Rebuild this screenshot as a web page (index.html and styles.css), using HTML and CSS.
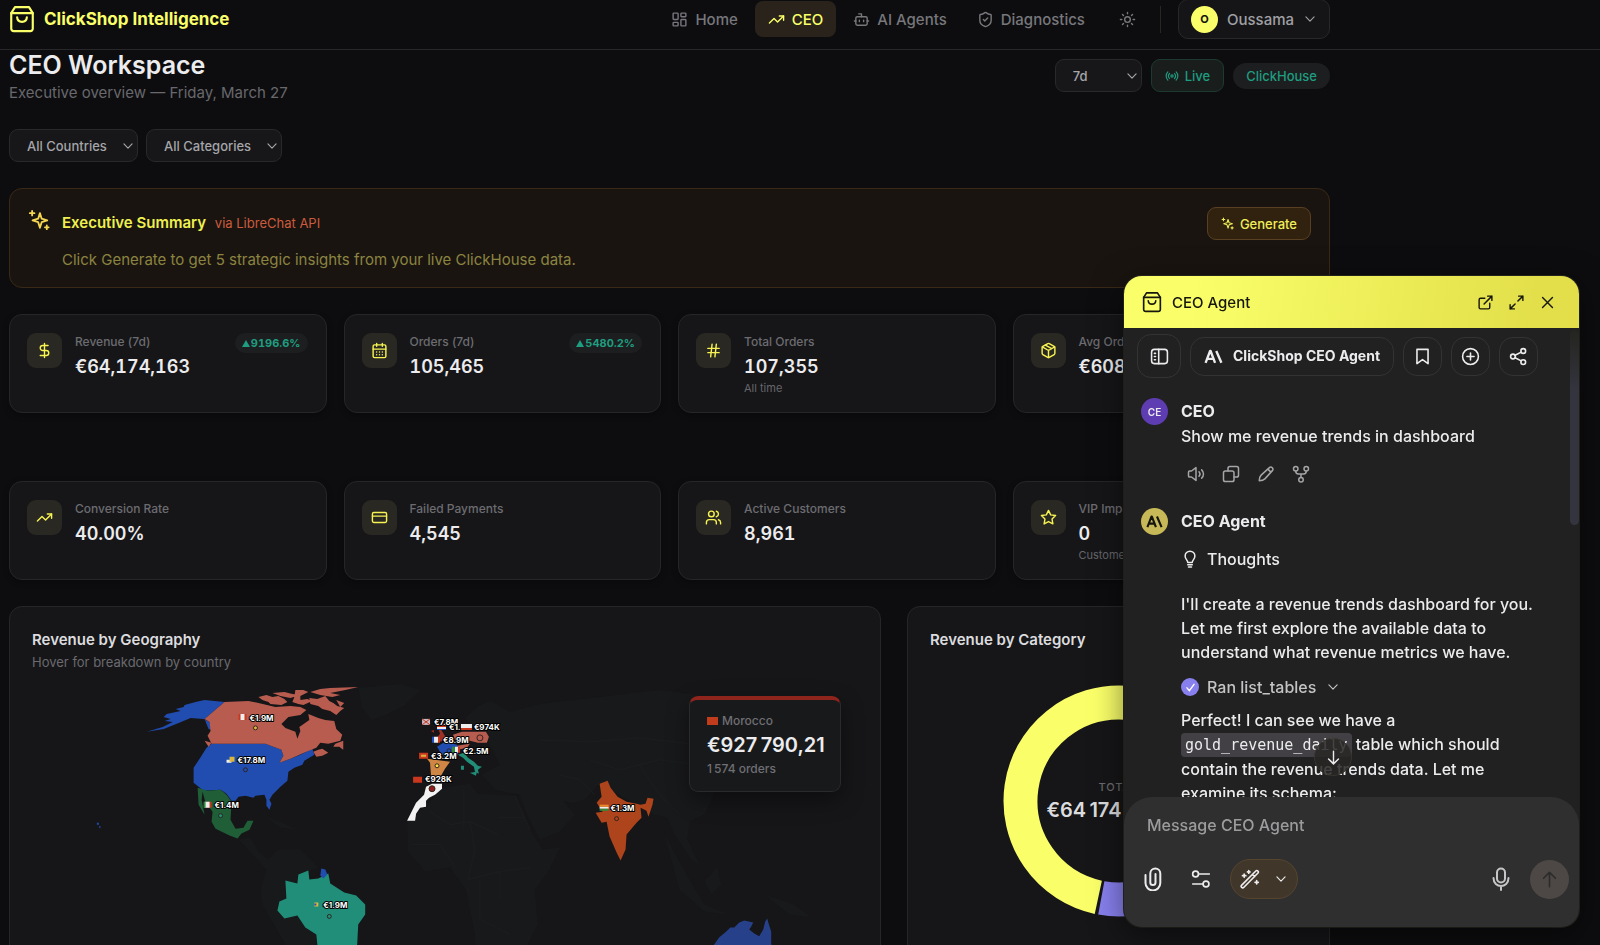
FILE: index.html
```html
<!DOCTYPE html>
<html lang="en">
<head>
    <meta charset="UTF-8">
    <meta name="viewport" content="width=device-width, initial-scale=1.0">
    <title>ClickShop Intelligence</title>
    <link rel="stylesheet" href="styles.css">
</head>
<body>
    <!-- shared icons -->
    <svg class="sprite" aria-hidden="true">
        <symbol id="i-bag" viewBox="0 0 24 26"><path d="M2 7.5 5.5 2h13L22 7.5V22a2.200 2.200 0 0 1-2.200 2.200H4.200A2.200 2.200 0 0 1 2 22z"/><path d="M2 7.500h20M7.500 11.500c.4 5.500 8.600 5.500 9 0"/></symbol>
        <symbol id="i-grid" viewBox="0 0 24 24"><rect x="3" y="3" width="7" height="9" rx="1"/><rect x="14" y="3" width="7" height="5" rx="1"/><rect x="14" y="12" width="7" height="9" rx="1"/><rect x="3" y="16" width="7" height="5" rx="1"/></symbol>
        <symbol id="i-trend" viewBox="0 0 24 24"><path d="m22 7-8.500 8.500-5-5L2 17"/><path d="M16 7h6v6"/></symbol>
        <symbol id="i-bot" viewBox="0 0 24 24"><path d="M12 8V4H8"/><rect x="4" y="8" width="16" height="12" rx="2"/><path d="M2 14h2M20 14h2M15 13v2M9 13v2"/></symbol>
        <symbol id="i-shield" viewBox="0 0 24 24"><path d="M20 13c0 5-3.500 7.500-7.660 8.950a1 1 0 0 1-.67-.01C7.500 20.500 4 18 4 13V6a1 1 0 0 1 1-1c2 0 4.500-1.200 6.240-2.720a1.170 1.170 0 0 1 1.520 0C14.510 3.810 17 5 19 5a1 1 0 0 1 1 1z"/><path d="m9 12 2 2 4-4"/></symbol>
        <symbol id="i-sun" viewBox="0 0 24 24"><circle cx="12" cy="12" r="4"/><path d="M12 2v2M12 20v2M4.930 4.930l1.410 1.410M17.660 17.660l1.410 1.410M2 12h2M20 12h2M6.340 17.660l-1.410 1.410M19.070 4.930l-1.410 1.410"/></symbol>
        <symbol id="i-down" viewBox="0 0 24 24"><path d="m5 8.500 7 7 7-7"/></symbol>
        <symbol id="i-live" viewBox="0 0 24 24"><path d="M4.900 19.100C1 15.200 1 8.800 4.900 4.900M7.800 16.200c-2.300-2.300-2.300-6.100 0-8.500M16.200 7.800c2.300 2.300 2.300 6.100 0 8.500M19.100 4.900C23 8.800 23 15.100 19.100 19"/><circle cx="12" cy="12" r="2"/></symbol>
        <symbol id="i-sparkles" viewBox="0 0 24 24"><path d="M13 4.500 14.900 10.600 21 12.500l-6.100 1.900L13 20.500l-1.900-6.100L5 12.500l6.100-1.900z"/><path d="M4.500 2v5M2 4.500h5M20.500 18v4M18.500 20h4"/></symbol>
        <symbol id="i-dollar" viewBox="0 0 24 24"><path d="M12 2v20M17 5H9.500a3.500 3.500 0 0 0 0 7h5a3.500 3.500 0 0 1 0 7H6"/></symbol>
        <symbol id="i-calendar" viewBox="0 0 24 24"><path d="M8 2v4M16 2v4"/><rect x="3" y="4" width="18" height="18" rx="2"/><path d="M3 10h18M8 14h.01M12 14h.01M16 14h.01M8 18h.01M12 18h.01M16 18h.01"/></symbol>
        <symbol id="i-hash" viewBox="0 0 24 24"><path d="M4 9h16M4 15h16M10 3 8 21M16 3l-2 18"/></symbol>
        <symbol id="i-box" viewBox="0 0 24 24"><path d="M11 21.730a2 2 0 0 0 2 0l7-4A2 2 0 0 0 21 16V8a2 2 0 0 0-1-1.730l-7-4a2 2 0 0 0-2 0l-7 4A2 2 0 0 0 3 8v8a2 2 0 0 0 1 1.730z"/><path d="M12 22V12M3.300 7 12 12l8.700-5M7.500 4.270l9 5.150"/></symbol>
        <symbol id="i-card" viewBox="0 0 24 24"><rect x="2" y="5" width="20" height="14" rx="2"/><path d="M2 10h20"/></symbol>
        <symbol id="i-users" viewBox="0 0 24 24"><path d="M16 21v-2a4 4 0 0 0-4-4H6a4 4 0 0 0-4 4v2"/><circle cx="9" cy="7" r="4"/><path d="M22 21v-2a4 4 0 0 0-3-3.870M16 3.130a4 4 0 0 1 0 7.750"/></symbol>
        <symbol id="i-star" viewBox="0 0 24 24"><path d="m12 2 3.090 6.260L22 9.270l-5 4.870 1.180 6.880L12 17.770l-6.180 3.250L7 14.140 2 9.270l6.910-1.010z"/></symbol>
        <symbol id="i-external" viewBox="0 0 24 24"><path d="M15 3h6v6M10 14 21 3M18 13v6a2 2 0 0 1-2 2H5a2 2 0 0 1-2-2V8a2 2 0 0 1 2-2h6"/></symbol>
        <symbol id="i-expand" viewBox="0 0 24 24"><path d="M15 3h6v6M9 21H3v-6M21 3l-7 7M3 21l7-7"/></symbol>
        <symbol id="i-close" viewBox="0 0 24 24"><path d="M5 5 19 19M19 5 5 19"/></symbol>
        <symbol id="i-sidebar" viewBox="0 0 24 24"><rect x="2" y="3" width="20" height="18" rx="3.500"/><path d="M11 3v18M5.500 8H7M5.500 12H7M5.500 16H7"/></symbol>
        <symbol id="i-mark" viewBox="0 0 24 20"><path d="m2 18 5.700-15h.6L14 18M4.500 13h7M15.500 3 22 18"/></symbol>
        <symbol id="i-bookmark" viewBox="0 0 24 24"><path d="M5 3h14v18l-7-5-7 5z"/></symbol>
        <symbol id="i-plus" viewBox="0 0 24 24"><circle cx="12" cy="12" r="10"/><path d="M12 7.500v9M7.500 12h9"/></symbol>
        <symbol id="i-share" viewBox="0 0 24 24"><circle cx="18" cy="5" r="3"/><circle cx="5" cy="12" r="3"/><circle cx="18" cy="19" r="3"/><path d="m7.700 10.500 7.700-4M7.700 13.500l7.700 4"/></symbol>
        <symbol id="i-speaker" viewBox="0 0 24 24"><path d="M12 3.500v17L6 16H3.500A1.500 1.500 0 0 1 2 14.500v-5A1.500 1.500 0 0 1 3.500 8H6zM16 9c1.600 1.700 1.600 4.300 0 6M19.500 6.500c3.300 3.100 3.300 7.900 0 11"/></symbol>
        <symbol id="i-copy" viewBox="0 0 24 24"><rect x="2" y="8" width="14" height="14" rx="2.500"/><path d="M8 8V4.500A2.500 2.500 0 0 1 10.500 2h9A2.500 2.500 0 0 1 22 4.500v9a2.500 2.500 0 0 1-2.500 2.500H16"/></symbol>
        <symbol id="i-pencil" viewBox="0 0 24 24"><path d="M3 21c0-4 1-6 2.500-7.500L16.500 3.500c2.500-2.500 6.500 1.500 4 4L10.500 18.500C9 20 7 21 3 21zM14.500 5.500l4 4"/></symbol>
        <symbol id="i-fork" viewBox="0 0 24 24"><circle cx="5" cy="5" r="3"/><circle cx="19" cy="5" r="3"/><circle cx="12" cy="19.500" r="3"/><path d="M5 8c0 2.500 1 4 3.500 4h7c2.500 0 3.500-1.500 3.500-4M12 12v4.500"/></symbol>
        <symbol id="i-bulb" viewBox="0 0 24 24"><path d="M9 16.500c0-3-3.500-4-3.500-8.500a6.500 6.500 0 0 1 13 0c0 4.500-3.500 5.500-3.500 8.500zM9 19.500h6M10 22.500h4"/></symbol>
        <symbol id="i-check" viewBox="0 0 24 24"><path d="m7 12.500 3.500 4L17 7.500"/></symbol>
        <symbol id="i-arrow-down" viewBox="0 0 24 24"><path d="M12 3v18M5 14l7 7 7-7"/></symbol>
        <symbol id="i-arrow-up" viewBox="0 0 24 24"><path d="M12 21V3M4.500 10.500 12 3l7.500 7.500"/></symbol>
        <symbol id="i-clip" viewBox="0 0 18 24"><path d="M1.500 8v8a7.300 7.300 0 0 0 14.800 0V6.500a5 5 0 0 0-10 0v9a2.600 2.600 0 0 0 5.200 0V7"/></symbol>
        <symbol id="i-sliders" viewBox="0 0 24 24"><circle cx="5.500" cy="6" r="3.500"/><path d="M9 6h13M2 18h12.500"/><circle cx="18" cy="18" r="3.500"/></symbol>
        <symbol id="i-wand" viewBox="0 0 24 24"><path d="M1.800 19.600 19 2.400a1.500 1.500 0 0 1 2.400 0l.2.200a1.500 1.500 0 0 1 0 2.200L4.400 22.200a1.500 1.500 0 0 1-2.200 0l-.4-.4a1.500 1.500 0 0 1 0-2.200zM15 6.500l2.600 2.600M5 6v4M3 8h4M20 14v4M18 16h4M10.500 2v3M9 3.500h3"/></symbol>
        <symbol id="i-mic" viewBox="0 0 18 24"><rect x="5" y="1.500" width="8" height="14" rx="4"/><path d="M1.500 11c0 10.500 15 10.500 15 0M9 19v4"/></symbol>
    </svg>

    <div class="app">
        <header class="topbar">
            <div class="topbar-row">
                <a class="brand" href="#"><svg class="icon brand-icon"><use href="#i-bag"/></svg>ClickShop Intelligence</a>
                <nav class="nav">
                    <a class="nav-link" href="#"><svg class="icon"><use href="#i-grid"/></svg>Home</a>
                    <a class="nav-link active" href="#"><svg class="icon"><use href="#i-trend"/></svg>CEO</a>
                    <a class="nav-link" href="#"><svg class="icon"><use href="#i-bot"/></svg>AI Agents</a>
                    <a class="nav-link" href="#"><svg class="icon"><use href="#i-shield"/></svg>Diagnostics</a>
                    <button class="theme-btn" aria-label="Toggle theme"><svg class="icon"><use href="#i-sun"/></svg></button>
                    <span class="divider"></span>
                    <button class="user-btn"><span class="user-avatar">O</span>Oussama<svg class="icon"><use href="#i-down"/></svg></button>
                </nav>
            </div>
        </header>

        <main class="content">
            <div class="page-head">
                <div>
                    <h1>CEO Workspace</h1>
                    <p class="page-date">Executive overview — Friday, March 27</p>
                </div>
                <div class="head-tools">
                    <div class="select-wrap period">
                        <select aria-label="Period"><option>7d</option><option>30d</option></select>
                        <svg class="icon"><use href="#i-down"/></svg>
                    </div>
                    <button class="live-btn"><svg class="icon"><use href="#i-live"/></svg>Live</button>
                    <span class="source">ClickHouse</span>
                </div>
            </div>

            <div class="filters">
                <div class="select-wrap countries">
                    <select aria-label="Country"><option>All Countries</option></select>
                    <svg class="icon"><use href="#i-down"/></svg>
                </div>
                <div class="select-wrap categories">
                    <select aria-label="Category"><option>All Categories</option></select>
                    <svg class="icon"><use href="#i-down"/></svg>
                </div>
            </div>

            <section class="summary">
                <svg class="icon summary-icon"><use href="#i-sparkles"/></svg>
                <div class="summary-body">
                    <h2>Executive Summary <span>via LibreChat API</span></h2>
                    <p>Click Generate to get 5 strategic insights from your live ClickHouse data.</p>
                </div>
                <button class="generate-btn"><svg class="icon"><use href="#i-sparkles"/></svg>Generate</button>
            </section>

            <section class="kpis">
                <article class="kpi">
                    <span class="kpi-icon"><svg class="icon"><use href="#i-dollar"/></svg></span>
                    <div><h3>Revenue (7d)</h3><p class="kpi-value">€64,174,163</p></div>
                    <span class="trend"><span class="up"></span>9196.6%</span>
                </article>
                <article class="kpi">
                    <span class="kpi-icon"><svg class="icon"><use href="#i-calendar"/></svg></span>
                    <div><h3>Orders (7d)</h3><p class="kpi-value">105,465</p></div>
                    <span class="trend"><span class="up"></span>5480.2%</span>
                </article>
                <article class="kpi">
                    <span class="kpi-icon"><svg class="icon"><use href="#i-hash"/></svg></span>
                    <div><h3>Total Orders</h3><p class="kpi-value">107,355</p><p class="kpi-note">All time</p></div>
                </article>
                <article class="kpi">
                    <span class="kpi-icon"><svg class="icon"><use href="#i-box"/></svg></span>
                    <div><h3>Avg Order Value</h3><p class="kpi-value">€608.49</p></div>
                </article>
            </section>

            <section class="kpis kpis-second">
                <article class="kpi">
                    <span class="kpi-icon"><svg class="icon"><use href="#i-trend"/></svg></span>
                    <div><h3>Conversion Rate</h3><p class="kpi-value">40.00%</p></div>
                </article>
                <article class="kpi">
                    <span class="kpi-icon"><svg class="icon"><use href="#i-card"/></svg></span>
                    <div><h3>Failed Payments</h3><p class="kpi-value">4,545</p></div>
                </article>
                <article class="kpi">
                    <span class="kpi-icon"><svg class="icon"><use href="#i-users"/></svg></span>
                    <div><h3>Active Customers</h3><p class="kpi-value">8,961</p></div>
                </article>
                <article class="kpi">
                    <span class="kpi-icon"><svg class="icon"><use href="#i-star"/></svg></span>
                    <div><h3>VIP Impacted</h3><p class="kpi-value">0</p><p class="kpi-note">Customers</p></div>
                </article>
            </section>

            <section class="charts">
                <article class="chart-card">
                    <h2>Revenue by Geography</h2>
                    <p class="chart-sub">Hover for breakdown by country</p>
                    <div class="map-wrap">
                        <svg class="map" viewBox="31 680 828 320">
                            <!-- countries without sales -->
                            <g class="land">
                                <path d="M358 688 400 684 420 690 405 705 385 715 372 720 362 708z"/>
                                <path d="M238 840 250 838 258 852 268 860 278 850 300 850 318 868 309 871 298 875 297 884 285 881 286 898 277 908 284 918 297 916 305 928 316 935 318 1000 292 1000 285 945 262 905 260 890 266 870z"/>
                                <path d="M265 817 280 822 297 830 280 828z"/>
                                <path d="M442 788 470 784 478 794 515 796 530 830 543 850 560 848 550 870 535 890 538 925 528 945 520 975 500 1000 478 1000 475 935 466 890 450 868 425 872 408 852 407 821 426 807z"/>
                                <path d="M465 718 480 705 492 701 510 712 540 704 600 697 660 690 720 698 800 704 830 712 800 725 780 730 770 745 750 735 735 760 720 775 712 800 705 815 690 822 688 840 700 865 692 860 675 835 668 818 655 815 637 805 600 784 585 800 572 803 560 800 555 790 575 815 560 832 540 840 526 812 520 795 495 790 482 775 500 765 489 743z"/>
                                <path d="M665 835 690 880 705 905 730 915 705 912 680 890zM705 882 718 868 722 885 712 895zM765 895 795 905 812 918 790 915z"/>
                            </g>
                            <g class="borders">
                                <path d="M430 812 450 825 470 822 498 835M464 790V830M498 818H525M470 822 475 850 468 880 500 872 530 868M412 845H440L455 868M480 880V920L510 935M500 872V900M515 796 530 830M540 740 590 742 640 738 700 745 740 740M590 760 620 770 660 760 700 765M560 775 580 780 595 795M640 765 660 795 680 815"/>
                            </g>
                            <!-- countries with sales -->
                            <path class="usa" d="M211 744H265L273 747 281 750 283 756 279 763 290 759 300 755 306 752 312 749 314 755 304 761 302 765 294 768 288 772 287 781 280 787 272 795 269 800 271 804 269 810 266 806 266 800 264 795 255 796 253 798 245 796 238 797 235 801 231 801 226 794 220 790 203 791 193 783V768L199 759 206 748z"/>
                            <path class="usa" d="M224 702 204 700 195 702 184 705 183 707 175 709 180 711 166 714 163 717 170 719 164 721 172 722 162 727 146 732 163 729 178 723 190 718 203 719 209 722 211 730 208 729 204 719z"/>
                            <path class="usa" d="M96 823h2v2h-2zM98 826l2 1-1 2z"/>
                            <path class="canada" d="M224 702 248 701 258 703 275 707 290 706 300 707 306 710 300 715 288 717 281 724 285 728 295 732 297 739 300 731 299 727 309 720 308 714 318 718 325 720 334 721 336 729 342 735 340 741 328 744 320 743 316 748 306 752 290 759 279 763 283 756 281 750 273 747 265 744H211L207 736 210 731 209 722 204 719z"/>
                            <path class="canada" d="M258 697 266 695 272 697 278 696 284 699 287 702 281 705 270 704 268 702 262 700zM284 692 292 694 300 695 290 698 280 696 272 693zM309 698 317 699 325 696 329 701 333 703 337 706 344 708 340 711 336 715 330 711 322 709 318 706 310 704zM310 692 320 689 330 688 358 687 345 690 330 693 340 695 332 697 320 695zM295 690 303 690 308 692 300 696 300 700 307 699 312 701 303 705 298 704 292 702 294 697zM313 752 318 750 322 749 328 753 322 756 316 757zM335 744 343 741 343 750 339 747 333 747zM204 741 211 743 208 747zM336 700l8 3-4 4z"/>
                            <path class="mexico" d="M197 788 207 791 220 790 226 795 231 802 230 820 235 829 243 828 247 821 253 821 249 830 241 834 237 839 229 836 215 829 211 822 212 812 205 803 202 792 201 800 204 815 198 805z"/>
                            <path class="brazil" d="M298 875 308 871 309 880 318 879 328 874 330 884 344 893 356 896 365 905V915L358 925 357 945 350 965 335 985 325 975 317 945 316 935 305 928 297 916 284 919 277 911 279 902 286 899 285 881 297 884z"/>
                            <path class="usa" d="M321 869 325 870 327 875 323 879 320 876z"/>
                            <path class="uk" d="M437 725 442 731 446 738 441 742 436 739 440 734zM431 731l3-1v3z"/>
                            <path class="canada" d="M453 735 462 732 486 732 489 737 487 743 478 743 470 741 462 742 455 740zM457 746 470 744 467 748 458 750z"/>
                            <path class="usa" d="M437 747 445 742 457 745 459 750 457 757 449 755 445 758 440 752z"/>
                            <path class="spain" d="M427 759 450 762 445 769 441 776 431 776 430 763z"/>
                            <path class="brazil" d="M458 755 464 753 468 758 474 762 478 766 482 767 478 770 479 774 475 772 474 767 467 762 463 758zM470 773l7-1-1 4zM461 766h3v4h-3z"/>
                            <path class="morocco" d="M426 787 432 784H442V789L435 795 429 798 426 801 426 807 420 808 416 814 415 821H407L412 811 416 803 424 795z"/>
                            <path class="india" d="M600 784 608 781 611 788 618 797 627 802 637 804 641 805 646 804 648 798 654 799 653 805 649 817 647 811 641 808 642 818 637 823 627 835 626 850 621 861 617 853 610 837 607 822 602 823 596 813 603 812 597 803 602 797z"/>
                            <path class="australia" d="M700 1000 703 960 715 945 720 938 727 932 731 928 735 928 740 923 745 921 754 923 752 927 750 930 755 934 760 937 764 930 766 922 768 919 770 926 772 932 772 945 778 955 775 1000z"/>
                            <g class="dots">
                                <circle cx="255" cy="728" r="2" fill="#d9b63c"/><circle cx="245" cy="770" r="2"/><circle cx="220" cy="816" r="2" fill="#1f8f78"/><circle cx="329" cy="917" r="2"/>
                                <circle cx="480" cy="738" r="3"/><circle cx="437" cy="766" r="2" fill="#ffe04a"/><circle cx="449" cy="751" r="2"/><circle cx="432" cy="789" r="3" fill="#8f1d1d"/><circle cx="617" cy="819" r="2"/>
                            </g>
                            <!-- flags -->
                            <path fill="#c8371e" d="M238 714h8v6h-8zM206 802h5v6h-5zM419 753h9v6h-9zM413 777h9v6h-9z"/>
                            <path fill="#eee" d="M240 714h4v6h-4zM204 802h5v6h-5zM226 760h5v3h-5zM461 724h11v4h-11zM437 727h9v2h-9zM434 737h4v6h-4zM455 747h3v6h-3zM600 807h9v2h-9z"/>
                            <path fill="#d9b63c" d="M229 757h5v5h-5zM314 903h4v4h-4zM421 755h5v2h-5z"/>
                            <path fill="#c8371e" d="M461 728h11v2h-11zM437 724h9v3h-9zM438 737h2v6h-2zM458 747h2v6h-2z"/>
                            <path fill="#2350c0" d="M432 737h2v6h-2zM437 729h9v1h-9zM314 904h2v2h-2z"/>
                            <path fill="#2f8a3c" d="M203 802h2v6h-2zM452 747h3v6h-3zM600 809h9v2h-9z"/>
                            <path fill="#e98b2c" d="M600 805h9v2h-9z"/>
                            <path fill="#c9b9c4" d="M422 719h8v6h-8z"/>
                            <path d="m422 719 8 6M430 719l-8 6" stroke="#c8371e"/>
                            <g class="labels">
                                <text x="249" y="721">€1.9M</text>
                                <text x="237" y="763">€17.8M</text>
                                <text x="214" y="808">€1.4M</text>
                                <text x="323" y="909">€1.9M</text>
                                <text x="434" y="725">€7.8M</text>
                                <text x="449" y="730">€1.</text>
                                <text x="474" y="730">€974K</text>
                                <text x="443" y="743">€8.9M</text>
                                <text x="463" y="754">€2.5M</text>
                                <text x="431" y="759">€3.2M</text>
                                <text x="425" y="782">€928K</text>
                                <text x="611" y="811">€1.3M</text>
                            </g>
                        </svg>
                        <div class="map-tip">
                            <p class="tip-country"><span class="flag-ma"></span>Morocco</p>
                            <p class="tip-value">€927&#8239;790,21</p>
                            <p class="tip-orders">1&#8239;574 orders</p>
                        </div>
                    </div>
                </article>

                <article class="chart-card">
                    <h2>Revenue by Category</h2>
                    <div class="donut-wrap">
                        <svg class="donut" viewBox="-116 -116 232 232">
                            <path class="seg-a" d="M-20.700 96.300A98.500 98.500 0 1 1 98.500 0"/>
                            <path class="seg-b" d="M-17.700 96.900A98.500 98.500 0 0 0 64 75"/>
                            <path class="seg-c" d="M66 73A98.500 98.500 0 0 0 98.400 3"/>
                        </svg>
                        <div class="donut-label"><span>TOTAL</span><strong>€64&#8239;174&#8239;163,00</strong></div>
                    </div>
                </article>
            </section>
        </main>

        <aside class="chat">
            <header class="chat-head">
                <svg class="icon chat-bag"><use href="#i-bag"/></svg>
                <h2>CEO Agent</h2>
                <button aria-label="Open in new tab"><svg class="icon"><use href="#i-external"/></svg></button>
                <button aria-label="Expand"><svg class="icon"><use href="#i-expand"/></svg></button>
                <button aria-label="Close"><svg class="icon"><use href="#i-close"/></svg></button>
            </header>
            <div class="chat-body">
                <div class="chat-tools">
                    <button class="tool tool-side" aria-label="Sidebar"><svg class="icon"><use href="#i-sidebar"/></svg></button>
                    <button class="tool tool-agent"><svg class="icon mark"><use href="#i-mark"/></svg>ClickShop CEO Agent</button>
                    <button class="tool" aria-label="Bookmark"><svg class="icon"><use href="#i-bookmark"/></svg></button>
                    <button class="tool" aria-label="New chat"><svg class="icon"><use href="#i-plus"/></svg></button>
                    <button class="tool" aria-label="Share"><svg class="icon"><use href="#i-share"/></svg></button>
                </div>

                <div class="message">
                    <span class="avatar avatar-user">CE</span>
                    <div>
                        <h3>CEO</h3>
                        <p>Show me revenue trends in dashboard</p>
                        <div class="actions">
                            <button aria-label="Read aloud"><svg class="icon"><use href="#i-speaker"/></svg></button>
                            <button aria-label="Copy"><svg class="icon"><use href="#i-copy"/></svg></button>
                            <button aria-label="Edit"><svg class="icon"><use href="#i-pencil"/></svg></button>
                            <button aria-label="Fork"><svg class="icon"><use href="#i-fork"/></svg></button>
                        </div>
                    </div>
                </div>

                <div class="message">
                    <span class="avatar avatar-agent"><svg class="icon mark"><use href="#i-mark"/></svg></span>
                    <div>
                        <h3>CEO Agent</h3>
                        <button class="thoughts"><svg class="icon"><use href="#i-bulb"/></svg>Thoughts</button>
                        <p>I'll create a revenue trends dashboard for you. Let me first explore the available data to understand what revenue metrics we have.</p>
                        <button class="ran"><span class="done"><svg class="icon"><use href="#i-check"/></svg></span>Ran list_tables<svg class="icon ran-arrow"><use href="#i-down"/></svg></button>
                        <p>Perfect! I can see we have a <code>gold_revenue_daily</code> table which should contain the revenue trends data. Let me examine its schema:</p>
                    </div>
                </div>
                <span class="thumb"></span>
                <button class="to-bottom" aria-label="Scroll to bottom"><svg class="icon"><use href="#i-arrow-down"/></svg></button>
            </div>

            <form class="composer">
                <textarea rows="1" placeholder="Message CEO Agent" aria-label="Message CEO Agent"></textarea>
                <div class="composer-row">
                    <button type="button" class="plain" aria-label="Attach"><svg class="icon clip"><use href="#i-clip"/></svg></button>
                    <button type="button" class="plain" aria-label="Tools"><svg class="icon"><use href="#i-sliders"/></svg></button>
                    <button type="button" class="wand" aria-label="Skills"><svg class="icon"><use href="#i-wand"/></svg><svg class="icon wand-arrow"><use href="#i-down"/></svg></button>
                    <button type="button" class="plain mic" aria-label="Dictate"><svg class="icon"><use href="#i-mic"/></svg></button>
                    <button type="button" class="send" aria-label="Send"><svg class="icon"><use href="#i-arrow-up"/></svg></button>
                </div>
            </form>
        </aside>
    </div>
</body>
</html>
```
FILE: styles.css
```css
* {
    box-sizing: border-box;
}
body {
    margin: 0;
    background-color: #0d0d0f;
    color: #ececee;
    font-family: Inter, "Liberation Sans", sans-serif;
}
h1, h2, h3, p {
    margin: 0;
}
button, select, textarea {
    font: inherit;
    color: inherit;
    background: none;
    border: 0;
    padding: 0;
    margin: 0;
}
a {
    color: inherit;
    text-decoration: none;
}
.sprite {
    display: none;
}
.icon {
    width: 17px;
    height: 17px;
    flex: none;
    fill: none;
    stroke: currentColor;
    stroke-width: 2;
    stroke-linecap: round;
    stroke-linejoin: round;
}
.app {
    height: 100vh;
    overflow: hidden;
}

/* top bar */
.topbar {
    padding: 0 0 11px 9px;
    border-bottom: 1px solid #28282a;
}
.topbar-row {
    display: flex;
    justify-content: space-between;
    align-items: center;
    max-width: 1321px;
    height: 38px;
}
.brand {
    display: flex;
    align-items: center;
    gap: 9px;
    color: #faff69;
    font-size: 17px;
    font-weight: 700;
}
.brand-icon {
    width: 26px;
    height: 28px;
}
.nav {
    display: flex;
    align-items: center;
    gap: 4px;
    font-size: 15px;
    font-weight: 500;
    color: #77777c;
}
.nav-link {
    display: flex;
    align-items: center;
    gap: 7px;
    height: 36px;
    padding: 0 13px;
    border-radius: 8px;
}
.nav-link.active {
    background-color: #29231b;
    color: #faff69;
}
.theme-btn {
    display: flex;
    padding: 0 20px 0 17px;
}
.divider {
    width: 1px;
    height: 27px;
    margin-right: 13px;
    background-color: #2a2722;
}
.user-btn {
    display: flex;
    align-items: center;
    gap: 9px;
    height: 40px;
    padding: 0 12px;
    border: 1px solid #28282b;
    border-radius: 10px;
    background-color: #151517;
    color: #a0a0a5;
}
.user-btn .icon {
    width: 14px;
    height: 14px;
}
.user-avatar {
    display: grid;
    place-items: center;
    width: 27px;
    height: 27px;
    border-radius: 50%;
    background-color: #faff69;
    color: #111;
    font-size: 11px;
    font-weight: 700;
}

/* page */
.content {
    max-width: 1330px;
    padding-left: 9px;
}
.page-head {
    display: flex;
    justify-content: space-between;
}
h1 {
    font-size: 25px;
    line-height: 30px;
    font-weight: 600;
}
.page-date {
    margin-top: 3px;
    color: #68686d;
    font-size: 15px;
    line-height: 20px;
}
.head-tools {
    display: flex;
    align-items: center;
    align-self: flex-start;
    gap: 9px;
    padding-top: 9px;
    font-size: 13px;
}
.select-wrap {
    position: relative;
    height: 33px;
}
.select-wrap select {
    appearance: none;
    width: 100%;
    height: 100%;
    padding: 0 17px;
    border: 1px solid #29292b;
    border-radius: 9px;
    background-color: #171719;
    color: #a5a5aa;
    font-size: 13px;
    font-weight: 500;
}
.select-wrap .icon {
    position: absolute;
    right: 3px;
    top: 10px;
    width: 14px;
    height: 14px;
    color: #a5a5aa;
    pointer-events: none;
}
.period {
    width: 87px;
}
.countries {
    width: 129px;
}
.categories {
    width: 136px;
}
.live-btn {
    display: flex;
    align-items: center;
    gap: 6px;
    height: 33px;
    padding: 0 13px;
    border: 1px solid #1c3a30;
    border-radius: 9px;
    background-color: #191d1c;
    color: #1f9d80;
    font-weight: 500;
}
.live-btn .icon {
    width: 14px;
    height: 14px;
}
.source {
    padding: 0 13px;
    border-radius: 13px;
    background-color: #1d1e1f;
    color: #1f9d80;
    line-height: 26px;
    font-weight: 500;
}
.filters {
    display: flex;
    gap: 8px;
    margin: 26px 0;
}

/* executive summary */
.summary {
    display: flex;
    align-items: flex-start;
    height: 100px;
    padding: 18px;
    border: 1px solid #3a2916;
    border-radius: 13px;
    background-color: #1a1410;
}
.summary-icon {
    width: 22px;
    height: 22px;
    margin: 2px 12px 0 0;
    color: #f4d653;
}
.summary-body {
    flex: 1;
}
.summary h2 {
    color: #eef04f;
    font-size: 15px;
    line-height: 32px;
    font-weight: 600;
}
.summary h2 span {
    margin-left: 5px;
    color: #cc5b3d;
    font-size: 13px;
    font-weight: 400;
}
.summary p {
    margin-top: 11px;
    color: #8b8441;
    font-size: 15px;
    line-height: 20px;
}
.generate-btn {
    display: flex;
    align-items: center;
    gap: 6px;
    height: 33px;
    padding: 0 13px;
    border: 1px solid #5a4022;
    border-radius: 9px;
    background-color: #30220f;
    color: #f0ee58;
    font-size: 13px;
    font-weight: 500;
}
.generate-btn .icon {
    width: 13px;
    height: 13px;
}

/* kpi cards */
.kpis {
    display: grid;
    grid-template-columns: repeat(4, 1fr);
    gap: 17px;
    margin-top: 26px;
}
.kpis-second {
    margin-top: 68px;
}
.kpi {
    display: flex;
    align-items: flex-start;
    height: 99px;
    padding: 18px 18px 0 17px;
    border: 1px solid #262628;
    border-radius: 13px;
    background-color: #161618;
    box-shadow: 0 2px 6px rgba(0, 0, 0, 0.3);
}
.kpi-icon {
    display: grid;
    place-items: center;
    width: 35px;
    height: 35px;
    margin-right: 13px;
    border-radius: 9px;
    background-color: #2a2822;
    color: #f6f352;
}
.kpi h3 {
    color: #6c6c71;
    font-size: 12px;
    line-height: 18px;
    font-weight: 500;
}
.kpi-value {
    margin-top: 4px;
    font-size: 18px;
    line-height: 24px;
    font-weight: 600;
    font-variant-numeric: tabular-nums;
}
.kpi-note {
    margin-top: 2px;
    color: #66666b;
    font-size: 11px;
    line-height: 14px;
}
.trend {
    display: flex;
    align-items: center;
    gap: 1px;
    height: 20px;
    margin-left: auto;
    padding: 0 7px;
    border-radius: 10px;
    background-color: #1d1e1f;
    color: #1f9d80;
    font-size: 11px;
    font-weight: 700;
    font-variant-numeric: tabular-nums;
}
.up {
    border: 4px solid transparent;
    border-top: 0;
    border-bottom: 7px solid #1f9d80;
}

/* charts */
.charts {
    display: grid;
    grid-template-columns: 872fr 423fr;
    gap: 26px;
    margin-top: 26px;
}
.chart-card {
    height: 420px;
    padding: 22px;
    border: 1px solid #262628;
    border-radius: 13px;
    background-color: #161618;
}
.chart-card h2 {
    color: #dcdcdf;
    font-size: 15px;
    line-height: 22px;
    font-weight: 600;
}
.chart-sub {
    color: #6a6a6f;
    font-size: 13px;
    line-height: 22px;
}
.map-wrap {
    position: relative;
    margin-top: 7px;
}
.map {
    display: block;
    width: 100%;
}
.land {
    fill: #18191b;
}
.borders {
    fill: none;
    stroke: #1b1e1f;
}
.usa { fill: #214db0; }
.canada { fill: #b85c4f; }
.mexico { fill: #1f5e37; }
.brazil { fill: #208e78; }
.uk { fill: #9d3024; }
.spain { fill: #cf8644; }
.morocco { fill: #f2f2f2; }
.india { fill: #ae441b; }
.australia { fill: #26418a; }
.dots {
    fill: none;
    stroke: #30251f;
}
.labels {
    fill: #fff;
    stroke: #000;
    stroke-width: 2;
    stroke-linejoin: round;
    paint-order: stroke;
    font-size: 8px;
    font-weight: 700;
}
.map-tip {
    position: absolute;
    top: 16px;
    right: 17px;
    width: 152px;
    height: 96px;
    padding: 13px 17px;
    border: 1px solid #2a2a2c;
    border-top: 4px solid #8f241c;
    border-radius: 9px;
    background-color: #18191b;
    box-shadow: 0 8px 22px rgba(0, 0, 0, 0.4);
    white-space: nowrap;
}
.tip-country, .tip-orders {
    color: #6f6f74;
    font-size: 12px;
    line-height: 16px;
    font-weight: 500;
}
.flag-ma {
    display: inline-block;
    width: 11px;
    height: 8px;
    margin-right: 4px;
    background-color: #c03c1c;
}
.tip-value {
    margin: 4px 0;
    font-size: 20px;
    line-height: 24px;
    font-weight: 600;
}
.donut-wrap {
    position: relative;
    display: flex;
    justify-content: center;
    margin-top: 34px;
}
.donut {
    width: 232px;
    height: 232px;
    fill: none;
    stroke-width: 34;
}
.seg-a { stroke: #faff69; }
.seg-b { stroke: #8880ee; }
.seg-c { stroke: #208e78; }
.donut-label {
    position: absolute;
    inset: 0;
    display: flex;
    flex-direction: column;
    align-items: center;
    justify-content: center;
    color: #dcdcdf;
    font-size: 20px;
    line-height: 28px;
}
.donut-label strong {
    font-weight: 600;
}
.donut-label span {
    color: #6a6a6f;
    font-size: 11px;
    line-height: 18px;
    font-weight: 500;
    letter-spacing: 1px;
}

/* chat panel */
.chat {
    position: fixed;
    right: 21px;
    bottom: 18px;
    display: flex;
    flex-direction: column;
    width: 455px;
    height: 651px;
    border-radius: 18px;
    overflow: hidden;
    background-color: #212121;
    box-shadow: 0 8px 32px rgba(0, 0, 0, 0.5), 0 0 0 1px #2a2a22;
    font-weight: 500;
}
.chat-head {
    display: flex;
    align-items: center;
    gap: 14px;
    height: 52px;
    padding: 0 23px 0 18px;
    background-image: linear-gradient(100deg, #faff69 15%, #e2df4a 90%);
    color: #16160c;
}
.chat-head h2 {
    flex: 1;
    margin-left: -4px;
    font-size: 15px;
    font-weight: 500;
}
.chat-head button {
    display: flex;
}
.chat-bag {
    width: 20px;
    height: 22px;
}
.chat-body {
    position: relative;
    flex: 1;
    overflow: hidden;
    padding: 6px 30px 0 13px;
    font-size: 16px;
    line-height: 24px;
}
.chat-tools {
    display: flex;
    align-items: center;
    gap: 9px;
    margin-bottom: 20px;
}
.tool {
    display: grid;
    place-items: center;
    width: 39px;
    height: 39px;
    border: 1px solid #333;
    border-radius: 14px;
}
.tool .icon {
    width: 19px;
    height: 19px;
}
.icon.mark {
    stroke-width: 3;
    stroke-linecap: butt;
}
.tool-side {
    width: 44px;
    height: 44px;
}
.tool-agent {
    display: flex;
    align-items: center;
    gap: 10px;
    width: auto;
    padding: 0 13px;
    font-size: 14px;
    font-weight: 700;
}
.message {
    display: flex;
    gap: 13px;
    padding-left: 4px;
    margin-bottom: 22px;
}
.avatar {
    display: grid;
    place-items: center;
    flex: none;
    width: 27px;
    height: 27px;
    border-radius: 50%;
    font-size: 10px;
    font-weight: 600;
}
.avatar-user {
    background-color: #5e3cb2;
}
.avatar-agent {
    background-color: #c7b957;
    color: #15150f;
}
.message h3 {
    font-size: 16px;
    line-height: 26px;
    font-weight: 700;
}
.actions {
    display: flex;
    gap: 17px;
    padding: 17px 0 3px 6px;
    color: #a5a5a8;
}
.actions button {
    display: flex;
}
.actions .icon {
    width: 18px;
    height: 18px;
}
.thoughts {
    display: flex;
    align-items: center;
    gap: 8px;
    margin: 13px 0 21px;
}
.thoughts .icon {
    width: 18px;
    height: 18px;
}
.ran {
    display: flex;
    align-items: center;
    gap: 8px;
    margin: 11px 0 9px;
    color: #c4c4c6;
}
.done {
    display: grid;
    place-items: center;
    width: 18px;
    height: 18px;
    border-radius: 50%;
    background-color: #8880ee;
    color: #fff;
}
.ran-arrow {
    width: 14px;
    height: 14px;
    margin-left: 2px;
}
code {
    padding: 3px 4px;
    border-radius: 4px;
    background-color: #424044;
    font-family: "DejaVu Sans Mono", monospace;
    font-size: 15px;
}
.thumb {
    position: absolute;
    top: 2px;
    right: 0;
    width: 9px;
    height: 195px;
    border-radius: 5px;
    background-image: linear-gradient(#24241f, #33343d 30%);
}
.to-bottom {
    position: absolute;
    left: 190px;
    bottom: 21px;
    display: grid;
    place-items: center;
    width: 38px;
    height: 38px;
    border: 1px solid #38342e;
    border-radius: 50%;
    background-color: rgba(40, 38, 37, 0.85);
}
.composer {
    height: 130px;
    padding: 15px 10px 0;
    border-radius: 28px 28px 18px 18px;
    background-color: #2f2f2f;
}
.composer textarea {
    display: block;
    width: 100%;
    height: 26px;
    padding: 0 13px;
    resize: none;
    font-size: 16px;
    line-height: 26px;
}
.composer textarea::placeholder {
    color: #9c9c9e;
}
.composer-row {
    display: flex;
    align-items: center;
    margin-top: 21px;
}
.plain {
    display: grid;
    place-items: center;
    width: 38px;
    height: 40px;
    margin-right: 10px;
}
.plain .icon {
    width: 20px;
    height: 20px;
}
.plain .clip, .mic .icon {
    width: 20px;
    height: 24px;
}
.wand {
    display: flex;
    align-items: center;
    gap: 14px;
    height: 40px;
    padding: 0 9px;
    border: 1px solid #55452f;
    border-radius: 20px;
    background-color: #41362a;
}
.wand .icon {
    width: 20px;
    height: 20px;
}
.wand .wand-arrow {
    width: 14px;
    height: 14px;
}
.mic {
    margin-left: auto;
    color: #c6c6c8;
}
.send {
    display: grid;
    place-items: center;
    width: 39px;
    height: 39px;
    border-radius: 50%;
    background-color: #4d4845;
    color: #2b2b2b;
}
.send .icon {
    width: 19px;
    height: 19px;
}
```
